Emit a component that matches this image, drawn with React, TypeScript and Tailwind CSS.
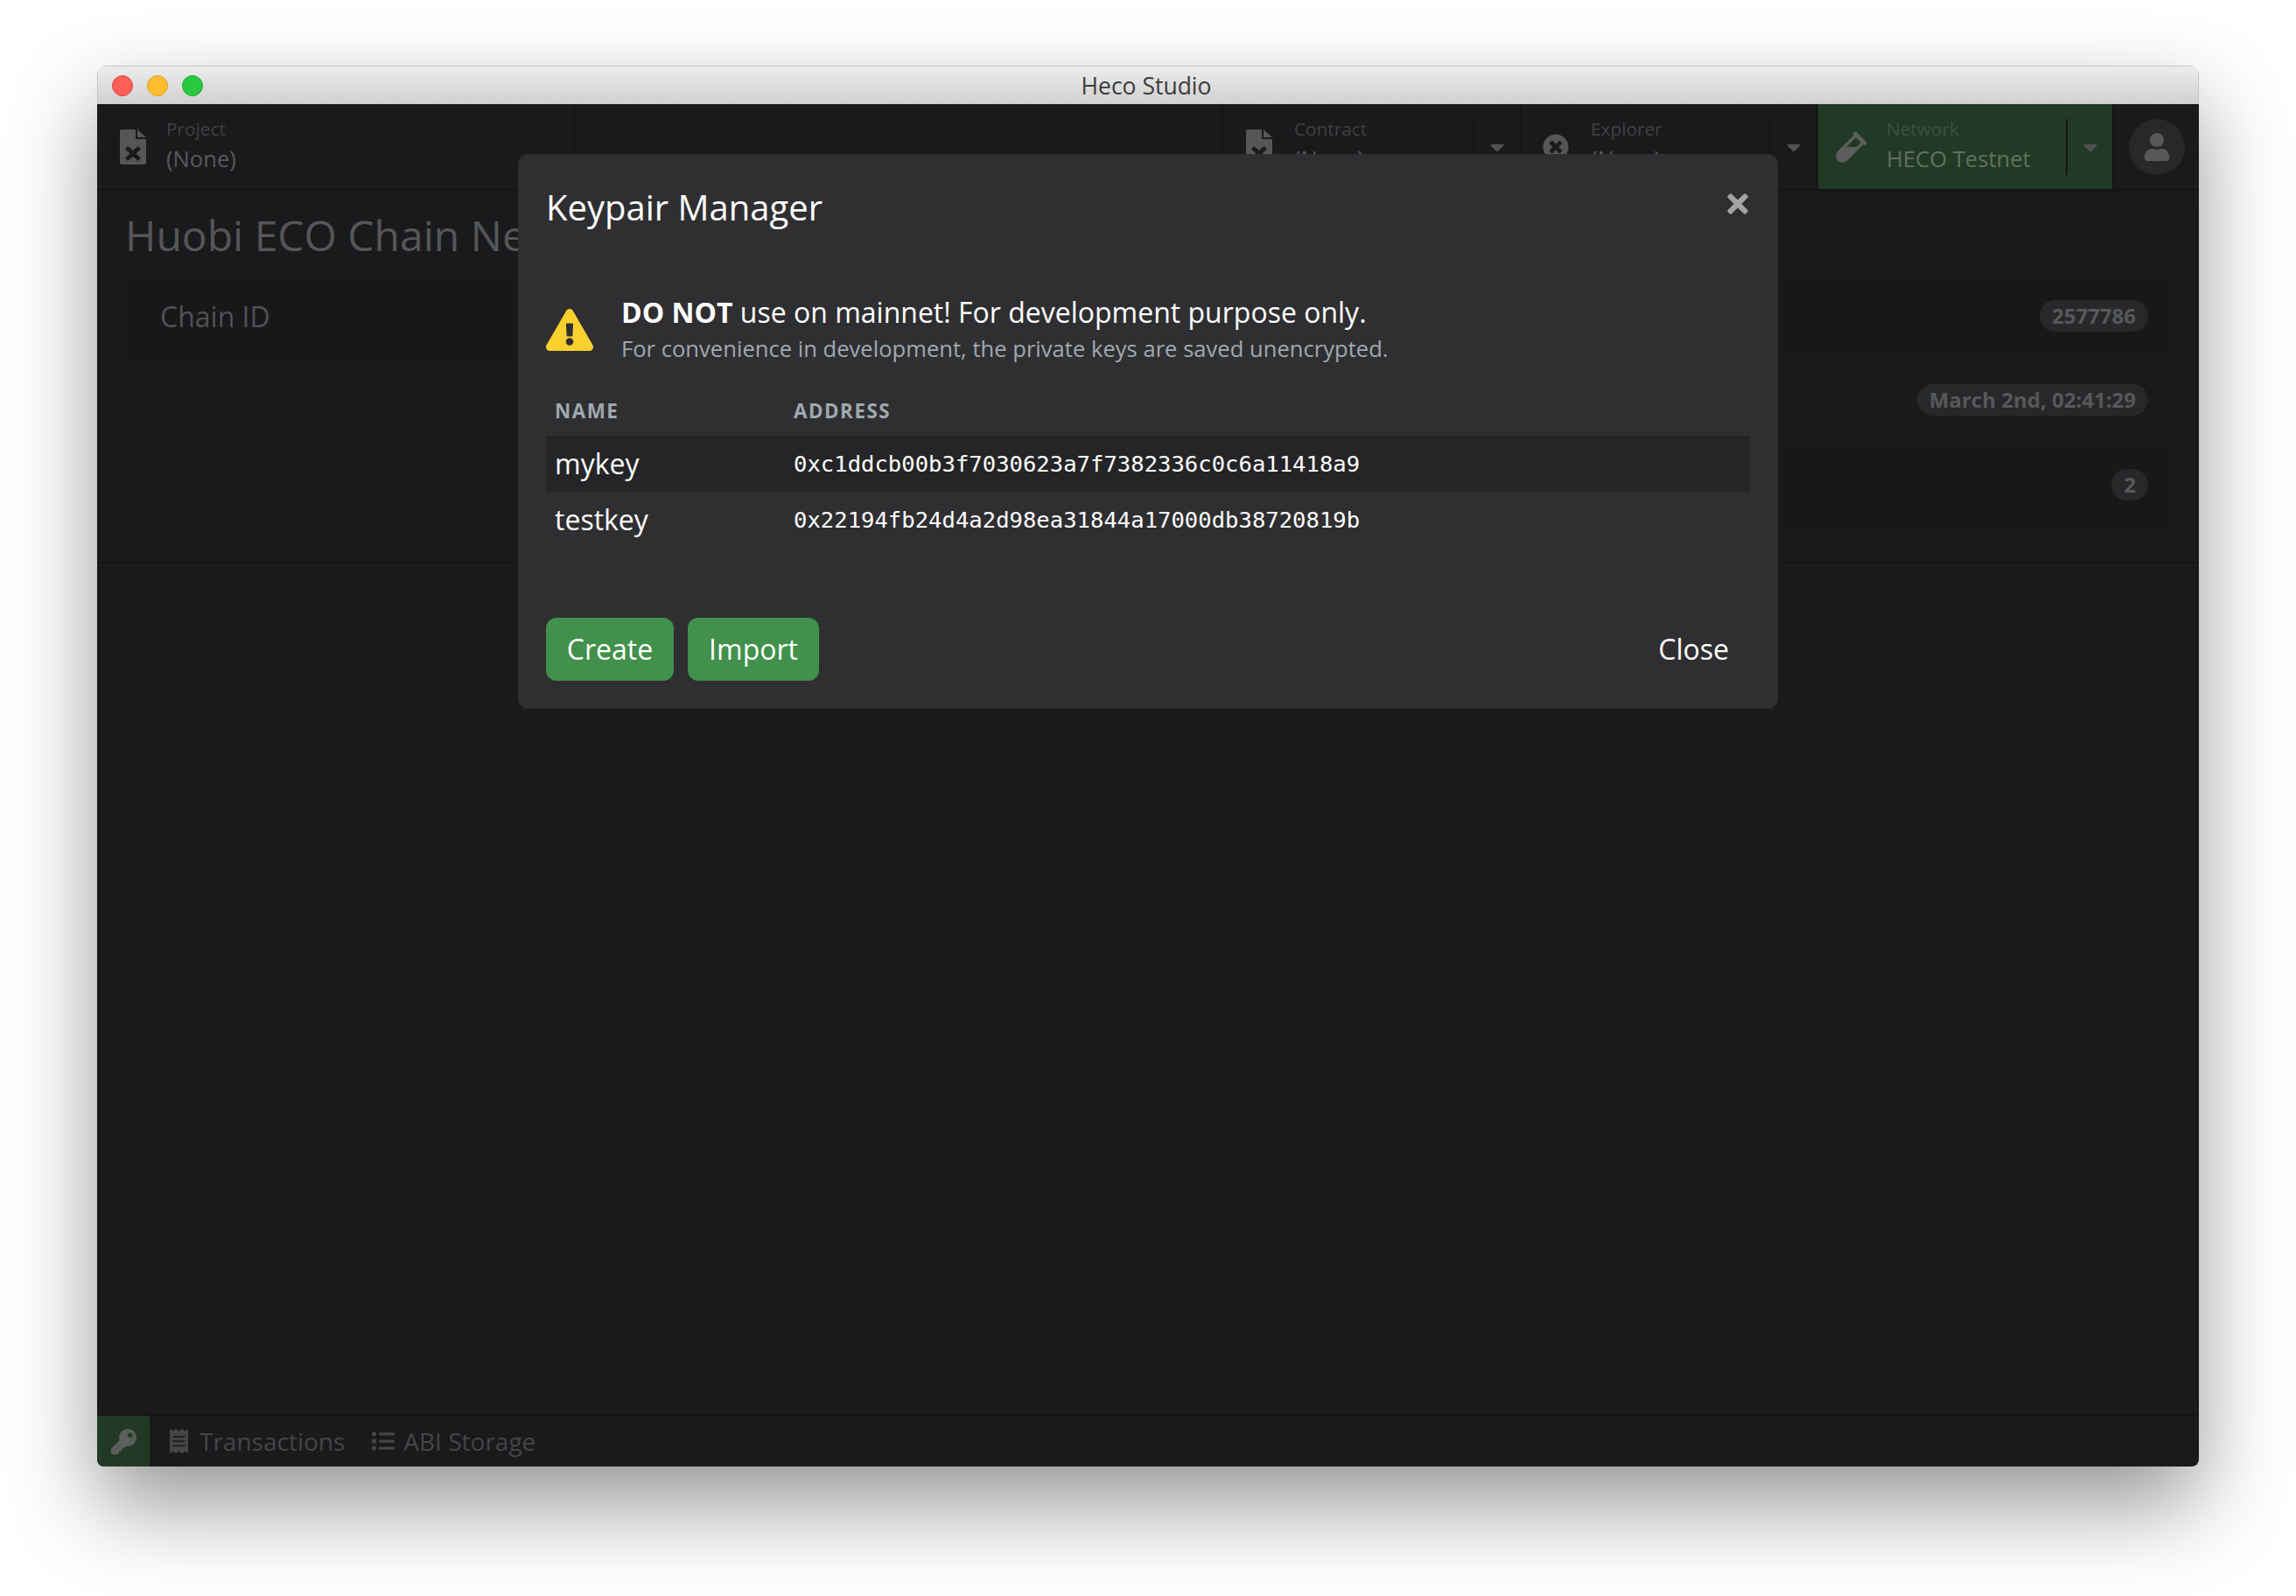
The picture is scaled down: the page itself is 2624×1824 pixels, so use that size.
import { FaCaretDown, FaExclamationTriangle, FaKey, FaList, FaReceipt, FaTimes, FaTimesCircle, FaUser, FaVial } from 'react-icons/fa';

function FileTimes({ className }: { className?: string }) {
  return (
    <svg className={className} viewBox="0 0 30 40" fill="currentColor">
      <path d="M0 2a2 2 0 012-2h16v11h12v27a2 2 0 01-2 2H2a2 2 0 01-2-2z" />
      <path d="M20 0l10 9H20z" />
      <path d="M9 19l6 5 6-5 3 3.500-5.500 5 5.500 5-3 3.500-6-5-6 5-3-3.500 5.500-5-5.500-5z" fill="#1a1a1c" />
    </svg>
  );
}

function Caret() {
  return <FaCaretDown className="h-[26px] w-[26px] text-[#505153]" />;
}

function Badge({ children }: { children: React.ReactNode }) {
  return <span className="rounded-full bg-[#28282a] px-[14px] text-[24px] leading-[36px] font-bold text-[#57585a]">{children}</span>;
}

function ItemText({ label, value, green }: { label: string; value: string; green?: boolean }) {
  return (
    <div className="-mt-[3px] flex-1">
      <div className={`text-[20.800px] leading-[32px] ${green ? 'text-[#3d5140]' : 'text-[#3f4042]'}`}>{label}</div>
      <div className={`text-[25.600px] leading-[38px] ${green ? 'text-[#63705f]' : 'text-[#58595b]'}`}>{value}</div>
    </div>
  );
}

export default function App() {
  return (
    <div className="min-h-screen bg-white pt-[75px] pl-[111px] [font-family:'Open_Sans',sans-serif]">
      <div className="relative flex h-[1601px] w-[2402px] flex-col overflow-hidden rounded-t-[10px] rounded-b-[8px] shadow-[0_44px_100px_0_rgba(0,0,0,0.42)]">
        {/* Title bar */}
        <div className="flex h-[44px] shrink-0 items-center border-x border-t border-[#c4c4c4] bg-gradient-to-b from-[#ececec] to-[#d0d0d0] pl-[16px]">
          <div className="flex gap-[16px]">
            <span className="h-[24px] w-[24px] rounded-full border border-[#e0443e] bg-[#ff5f57]" />
            <span className="h-[24px] w-[24px] rounded-full border border-[#dea123] bg-[#febc2e]" />
            <span className="h-[24px] w-[24px] rounded-full border border-[#1aab29] bg-[#28c840]" />
          </div>
          <div className="flex-1 pt-[2px] pr-[124px] text-center text-[26.500px] text-[#3c3c3c]">Heco Studio</div>
        </div>

        <div className="flex min-h-0 flex-1 flex-col bg-[#1a1a1c]">
          {/* Toolbar */}
          <div className="flex h-[99px] shrink-0 border-b-2 border-[#141416]">
            <div className="flex w-[546px] items-center border-r-2 border-[#141416]">
              <div className="w-[79px] shrink-0 pl-[26px] text-[#555658]">
                <FileTimes className="h-[40px] w-[30px]" />
              </div>
              <ItemText label="Project" value="(None)" />
            </div>
            <div className="flex-1 border-r-2 border-[#141416]" />
            <div className="flex w-[341px] items-center border-r-2 border-[#141416]">
              <div className="w-[81px] shrink-0 pl-[26px] text-[#555658]">
                <FileTimes className="h-[40px] w-[30px]" />
              </div>
              <ItemText label="Contract" value="(None)" />
              <div className="flex h-[64px] w-[54px] items-center justify-center border-l-2 border-[#141416]">
                <Caret />
              </div>
            </div>
            <div className="flex w-[339px] items-center border-r-2 border-[#141416]">
              <div className="w-[79px] shrink-0 pl-[24px] text-[#555658]">
                <FaTimesCircle className="h-[30px] w-[30px]" />
              </div>
              <ItemText label="Explorer" value="(None)" />
              <div className="flex h-[64px] w-[54px] items-center justify-center border-l-2 border-[#141416]">
                <Caret />
              </div>
            </div>
            <div className="flex w-[336px] items-center bg-[#213a25]">
              <div className="w-[78px] shrink-0 pl-[19px] text-[#5b5e5c]">
                <FaVial className="h-[38px] w-[38px]" />
              </div>
              <ItemText label="Network" value="HECO Testnet" green />
              <div className="flex h-[64px] w-[53px] items-center justify-center border-l-2 border-[#141416]">
                <Caret />
              </div>
            </div>
            <div className="flex w-[99px] items-center justify-center border-l-2 border-[#141416]">
              <div className="flex h-[64px] w-[64px] items-center justify-center rounded-full bg-[#28282a] text-[#59595b]">
                <FaUser className="h-[32px] w-[32px]" />
              </div>
            </div>
          </div>

          {/* Dimmed page behind the dialog */}
          <div className="flex h-[426px] shrink-0 flex-col border-b-2 border-[#141416] px-[32px]">
            <h1 className="pt-[11px] text-[48px] leading-[80px] text-[#555658]">Huobi ECO Chain Ne</h1>
            <div className="mt-[4px] grid grid-cols-2">
              <div className="flex h-[97px] items-center bg-[#18181a] px-[40px] text-[32px] text-[#505153]">Chain ID</div>
              <div>
                <div className="flex h-[96px] items-center justify-end bg-[#18181a] pr-[26px]">
                  <Badge>2577786</Badge>
                </div>
                <div className="flex h-[96px] items-center justify-end pr-[26px]">
                  <Badge>March 2nd, 02:41:29</Badge>
                </div>
                <div className="flex h-[97px] items-center justify-end bg-[#18181a] pr-[26px]">
                  <Badge>2</Badge>
                </div>
              </div>
            </div>
          </div>
          <div className="flex-1" />

          {/* Bottom bar */}
          <div className="flex h-[60px] shrink-0 items-stretch border-t-2 border-[#141416] text-[#444547]">
            <div className="flex w-[60px] items-center justify-center bg-[#213a25] text-[#5b5e5c]">
              <FaKey className="h-[29px] w-[29px]" />
            </div>
            <div className="ml-[23px] flex items-center gap-[13px] text-[28px]">
              <FaReceipt className="h-[28px] w-[21px]" />
              Transactions
            </div>
            <div className="ml-[30px] flex items-center gap-[9px] text-[28px]">
              <FaList className="h-[26px] w-[28px]" />
              ABI Storage
            </div>
          </div>
        </div>

        {/* Keypair Manager dialog */}
        <div className="absolute top-[101px] left-[481px] flex h-[634px] w-[1440px] flex-col rounded-[12px] bg-[#2f2f31] px-[32px] pb-[32px] text-white">
          <div className="flex items-start justify-between pt-[31px]">
            <h2 className="text-[40px] leading-[60px]">Keypair Manager</h2>
            <FaTimes className="mt-[9px] mr-[2px] h-[34px] w-[24px] text-[#a3a3a5]" />
          </div>
          <div className="mt-[68px] flex items-center gap-[32px]">
            <FaExclamationTriangle className="h-[48px] w-[54px] text-[#f8d12f]" />
            <div>
              <div className="text-[32px] leading-[44px]">
                <b>DO NOT</b> use on mainnet! For development purpose only.
              </div>
              <div className="pt-[1px] text-[25.600px] leading-[38px] text-[#a0a8b0]">For convenience in development, the private keys are saved unencrypted.</div>
            </div>
          </div>
          <table className="mt-[22px] w-full table-fixed">
            <thead>
              <tr className="h-[58px] text-left text-[22.400px] font-bold tracking-[1.5px] text-[#a0a8b0]">
                <th className="w-[283px] pt-[2px] pl-[10px]">NAME</th>
                <th className="pt-[2px]">ADDRESS</th>
              </tr>
            </thead>
            <tbody className="text-[32px]">
              <tr className="h-[64px] bg-[#252527]">
                <td className="pl-[10px]">mykey</td>
                <td className="[font-family:'DejaVu_Sans_Mono',monospace] text-[25.600px]">0xc1ddcb00b3f7030623a7f7382336c0c6a11418a9</td>
              </tr>
              <tr className="h-[64px]">
                <td className="pl-[10px]">testkey</td>
                <td className="[font-family:'DejaVu_Sans_Mono',monospace] text-[25.600px]">0x22194fb24d4a2d98ea31844a17000db38720819b</td>
              </tr>
            </tbody>
          </table>
          <div className="mt-auto flex gap-[16px] text-[32px]">
            <button className="h-[72px] w-[146px] rounded-[12px] bg-[#41914c]">Create</button>
            <button className="h-[72px] w-[150px] rounded-[12px] bg-[#41914c]">Import</button>
            <button className="ml-auto h-[72px] pr-[24px]">Close</button>
          </div>
        </div>
      </div>
    </div>
  );
}
